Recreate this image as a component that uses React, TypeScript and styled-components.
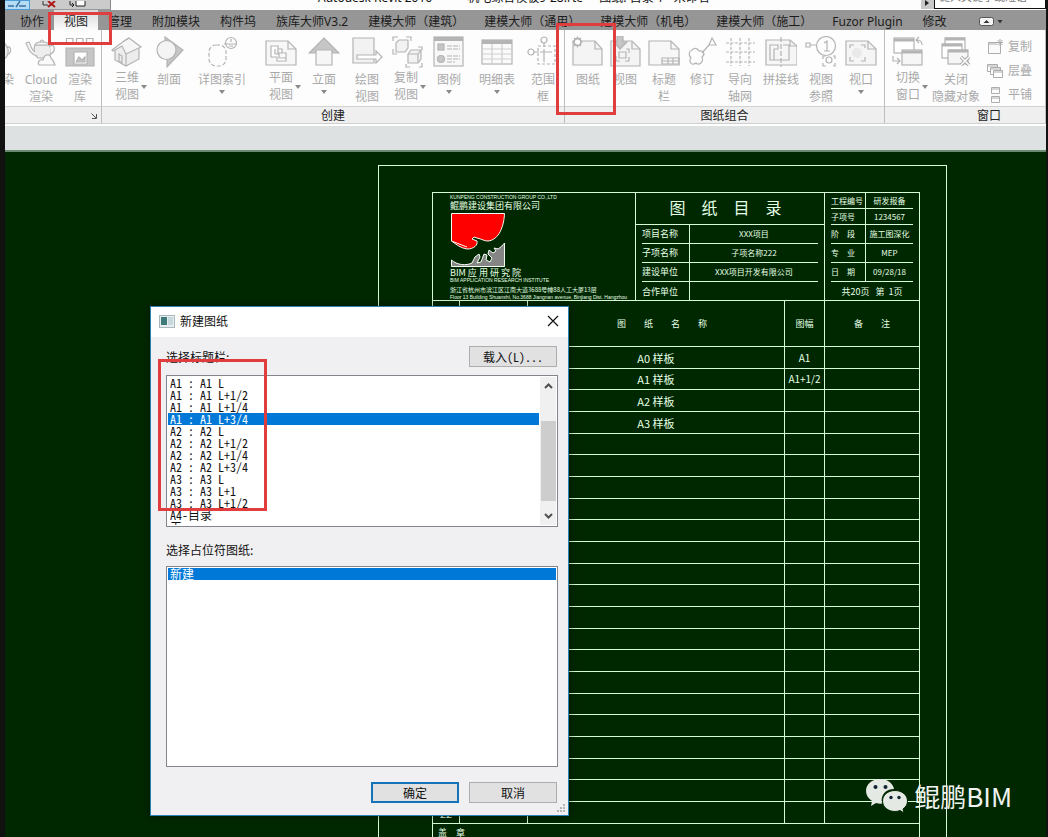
import React from "react";
import styled, { createGlobalStyle, css } from "styled-components";

const GlobalStyle = createGlobalStyle`
  *, *::before, *::after { box-sizing: border-box; }
  body { margin: 0; background: #111; }
  button, input { font: inherit; color: inherit; }
  ul { list-style: none; margin: 0; padding: 0; }
`;

const line = "#d6fbd6";
const paper = "#002800";

/* ---------- Window frame ---------- */

const AppWindow = styled.div`
  position: relative;
  display: flex;
  flex-direction: column;
  height: 100vh;
  overflow: hidden;
  padding: 0 2px 0 5px;
  background: #111;
  color: #222;
  font: 12px/16px "Noto Sans", "Noto Sans CJK SC", sans-serif;
`;

const TitleBar = styled.header`
  display: flex;
  flex: none;
  align-items: flex-end;
  height: 10px;
  overflow: hidden;
  background: #fdfdfd;
`;

const QuickAccess = styled.div`
  display: flex;
  align-items: flex-end;
  gap: 8px;
  width: 106px;
  height: 10px;
  background: #cbcbcb;
  border-right: 1px solid #888;
  border-bottom: 1px solid #999;
`;

const QuickButton = styled.button<{ $active?: boolean }>`
  display: flex;
  padding: 0 2px;
  border: 0;
  background: none;
  ${(p) => p.$active && css`
    background: #b4dcf7;
    outline: 1px solid #4a9bd6;
  `}
`;

const WindowTitle = styled.h1`
  flex: 1;
  margin: 0;
  padding: 0 0 4px 207px;
  font-size: 12px;
  line-height: 16px;
  font-weight: 400;
  color: #111;
  white-space: pre;
`;

const SearchArea = styled.div`
  display: flex;
  align-items: flex-end;
  width: 125px;
  height: 9px;
  align-self: flex-start;
  overflow: hidden;
  background: #c9c9c9;
`;

const SearchToggle = styled.button`
  display: flex;
  width: 13px;
  padding: 0 3px 2px;
  border: 0;
  background: #c9c9c9;
`;

const SearchInput = styled.input`
  flex: 1;
  min-width: 0;
  height: 22px;
  padding: 0 4px 4px;
  border: 1px solid #111;
  background: #fff;
  font-size: 11px;
  &::placeholder { color: #777; opacity: 1; }
`;

/* ---------- Ribbon ---------- */

const TabBar = styled.nav`
  display: flex;
  flex: none;
  height: 20px;
  padding-left: 5px;
  background: #969696;
`;

const Tab = styled.button<{ $active?: boolean }>`
  padding: 4px 10px 0;
  border: 0;
  background: ${(p) => (p.$active ? "linear-gradient(#d9d9d9, #fbfbfb)" : "none")};
  color: #1c1c1c;
  line-height: 16px;
  white-space: nowrap;
`;

const TabToggle = styled.button`
  display: flex;
  align-items: center;
  margin-left: 22px;
  padding: 2px 0 0;
  border: 0;
  background: none;
`;

const Ribbon = styled.div`
  display: flex;
  flex: none;
  height: 94px;
  background: #fdfdfd;
  border-bottom: 1px solid #cfcfcf;
`;

const Panel = styled.section<{ $grow?: boolean }>`
  display: flex;
  flex-direction: column;
  flex: ${(p) => (p.$grow ? "1" : "none")};
  border-right: 1px solid #bdbdbd;
`;

const PanelBody = styled.div<{ $left?: number; $right?: number }>`
  display: flex;
  flex: 1;
  padding: 0 ${(p) => p.$right ?? 0}px 0 ${(p) => p.$left ?? 0}px;
`;

const PanelTitle = styled.h2<{ $inset?: number }>`
  display: flex;
  justify-content: center;
  align-items: center;
  height: 17px;
  margin: 0;
  padding: 1px 0 0 ${(p) => p.$inset ?? 0}px;
  border-top: 1px solid #d2d2d2;
  background: #efeff0;
  font-size: 12px;
  line-height: 16px;
  font-weight: 400;
`;

const Launcher = styled.span`
  display: flex;
  margin-left: auto;
  padding-right: 4px;
`;

const ToolButton = styled.button<{ $w: number; $cut?: boolean }>`
  display: flex;
  flex: none;
  flex-direction: column;
  align-items: ${(p) => (p.$cut ? "flex-end" : "center")};
  width: ${(p) => p.$w}px;
  padding: 6px 0 0;
  border: 0;
  background: none;
  color: #a9a9a9;
  ${(p) => p.$cut && css`
    overflow: hidden;
    padding-right: 5px;
  `}
`;

const ToolIcon = styled.svg`
  flex: none;
  width: 32px;
  height: 32px;
  fill: none;
  stroke: #b4b4b4;
  stroke-width: 1.2;
`;

const ToolLabel = styled.span<{ $side?: boolean }>`
  display: grid;
  grid-template-columns: 1fr auto 1fr;
  align-items: center;
  margin-top: ${(p) => (p.$side ? 1 : 3)}px;
  line-height: 17px;
  text-align: center;
  white-space: pre;
`;

const ToolText = styled.span`
  grid-column: 2;
`;

const DropArrow = styled.span<{ $below?: boolean }>`
  grid-column: 3;
  width: 0;
  margin: ${(p) => (p.$below ? "2px 0 0" : "2px 0 0 2px")};
  border: 3px solid transparent;
  border-top: 4px solid #8a8a8a;
  border-bottom: 0;
`;

const StackedTools = styled.div`
  display: flex;
  flex-direction: column;
  gap: 8px;
  padding: 9px 0 0 6px;
`;

const SmallTool = styled.button`
  display: flex;
  align-items: center;
  gap: 5px;
  padding: 0;
  border: 0;
  background: none;
  color: #a9a9a9;
  line-height: 16px;
`;

const SmallIcon = styled.svg`
  width: 16px;
  height: 16px;
  fill: none;
  stroke: #adadad;
`;

const OptionsBar = styled.div`
  flex: none;
  height: 28px;
  background: #dee1e2;
  border-top: 2px solid #fff;
  border-bottom: 2px solid #6c8a72;
`;

/* ---------- Drawing area ---------- */

const Canvas = styled.main`
  flex: 1;
  min-height: 0;
  padding: 13px 99px 0 373px;
  overflow: hidden;
  background: ${paper};
  color: #e6ffe6;
`;

const Sheet = styled.div`
  padding: 26px 26px 60px 53px;
  border: 1px solid ${line};
`;

const SheetFrame = styled.div`
  border: 1px solid ${line};
  font-family: "Noto Sans CJK SC", sans-serif;
`;

const TitleBlock = styled.div`
  display: grid;
  grid-template-columns: 203px 1fr 94px;
  height: 108px;
  border-bottom: 1px solid ${line};
`;

const Company = styled.div`
  padding: 1px 0 0 17px;
  border-right: 1px solid ${line};
  overflow: hidden;
  white-space: pre;
`;

const TinyLatin = styled.p`
  margin: 0;
  font: 5px/6px "Liberation Sans Narrow", "Liberation Sans", sans-serif;
`;

const CompanyName = styled.p`
  margin: 0;
  font-size: 9px;
  line-height: 12px;
`;

const Institute = styled.p`
  margin: 0;
  font-size: 9px;
  line-height: 9px;
`;

const Address = styled.p`
  margin: 3px 0 0;
  font-size: 6px;
  line-height: 8px;
`;

const Emblem = styled.svg`
  display: block;
  width: 56px;
  height: 56px;
`;

const Middle = styled.div`
  border-right: 1px solid ${line};
`;

const SheetHeading = styled.h3`
  height: 32px;
  margin: 0;
  border-bottom: 1px solid ${line};
  padding-right: 9px;
  font-size: 16px;
  line-height: 28px;
  font-weight: 400;
  text-align: center;
`;

const FieldRow = styled.div<{ $h: number; $label: number }>`
  display: grid;
  grid-template-columns: ${(p) => p.$label}px 1fr;
  height: ${(p) => p.$h}px;
  margin: 0 6px;
  border-bottom: 1px solid ${line};
  &:last-child { border-bottom: 0; }
`;

const FieldLabel = styled.span<{ $size: number }>`
  display: flex;
  align-items: center;
  border-right: 1px solid ${line};
  font-size: ${(p) => p.$size}px;
  line-height: 12px;
  white-space: nowrap;
`;

const FieldValue = styled.span`
  display: flex;
  align-items: center;
  justify-content: center;
  font-size: 8px;
  line-height: 12px;
  white-space: nowrap;
`;

const PageCount = styled.p`
  margin: 0;
  padding-top: 3px;
  font-size: 9px;
  line-height: 14px;
  text-align: center;
  white-space: pre;
`;

const DrawingTable = styled.table`
  width: 100%;
  border-spacing: 0;
  table-layout: fixed;
  font-size: 11px;
  line-height: 14px;
  text-align: center;
  th, td {
    height: 22px;
    padding: 0;
    border-right: 1px solid ${line};
    border-bottom: 1px solid ${line};
    white-space: nowrap;
  }
  th { height: 46px; font-size: 9px; font-weight: 400; }
  th:nth-child(3) { padding-left: 12px; }
  th:last-child, td:last-child { border-right: 0; }
  tbody tr:nth-child(3n + 2) td { height: 21px; }
`;

const Col = styled.col<{ $w?: number }>`
  width: ${(p) => (p.$w ? `${p.$w}px` : "auto")};
`;

const SizeCell = styled.td`
  font-size: 10px;
`;

const StampRow = styled.div`
  height: 40px;
  padding: 3px 5px;
  font-size: 9px;
  line-height: 12px;
`;

/* ---------- Dialog ---------- */

const Dialog = styled.form`
  position: absolute;
  left: 150px;
  top: 306px;
  width: 419px;
  border: 1px solid #2d82b4;
  background: #f0eff1;
  color: #111;
  font-family: "Noto Sans CJK SC", sans-serif;
  box-shadow: 0 0 8px rgba(0, 0, 0, 0.5);
`;

const DialogBar = styled.div`
  display: flex;
  align-items: center;
  gap: 5px;
  height: 30px;
  padding: 0 9px 2px 8px;
  background: #fff;
`;

const DialogTitle = styled.h2`
  flex: 1;
  margin: 0;
  font-size: 12px;
  line-height: 16px;
  font-weight: 400;
`;

const CloseButton = styled.button`
  display: flex;
  padding: 0;
  border: 0;
  background: none;
`;

const DialogBody = styled.div`
  display: flex;
  flex-direction: column;
  padding: 9px 10px 12px 15px;
`;

const DialogRow = styled.div<{ $end?: boolean }>`
  display: flex;
  justify-content: ${(p) => (p.$end ? "flex-end" : "space-between")};
  align-items: center;
  gap: 10px;
  padding-right: 1px;
`;

const Caption = styled.span`
  line-height: 16px;
`;

const PushButton = styled.button<{ $primary?: boolean }>`
  width: 88px;
  height: 21px;
  padding: 0;
  border: ${(p) => (p.$primary ? "2px solid #1473b9" : "1px solid #adadad")};
  background: #e1e1e2;
  line-height: 16px;
  font-family: "Noto Sans Mono CJK SC", "Noto Sans CJK SC", monospace;
`;

const ListBox = styled.div<{ $h: number }>`
  display: flex;
  height: ${(p) => p.$h}px;
  margin: 8px 0 15px;
  padding: 1px;
  border: 1px solid #82868c;
  background: #fff;
  overflow: hidden;
`;

const Options = styled.ul`
  flex: 1;
  height: 100%;
  overflow: hidden;
  font: 12px/12px "Noto Sans Mono CJK SC", "Noto Sans CJK SC", monospace;
`;

const Option = styled.li<{ $selected?: boolean }>`
  padding-left: 2px;
  background: ${(p) => (p.$selected ? "#0078d7" : "none")};
  color: ${(p) => (p.$selected ? "#fff" : "#111")};
  white-space: pre;
`;

const ScrollBar = styled.div`
  display: flex;
  flex-direction: column;
  align-items: center;
  width: 16px;
  margin-left: 1px;
  padding: 6px 0;
  background: #f0f0f0;
`;

const ScrollThumb = styled.div`
  width: 15px;
  height: 80px;
  margin: 32px 0 auto;
  background: #cdcdcd;
`;

const Grip = styled.svg`
  position: absolute;
  right: 2px;
  bottom: 2px;
`;

/* ---------- Overlays ---------- */

const Highlight = styled.div<{ $x: number; $y: number; $w: number; $h: number }>`
  position: absolute;
  left: ${(p) => p.$x}px;
  top: ${(p) => p.$y}px;
  width: ${(p) => p.$w}px;
  height: ${(p) => p.$h}px;
  border: 3px solid #e03e3e;
  pointer-events: none;
`;

const Watermark = styled.div`
  position: absolute;
  right: 36px;
  bottom: 23px;
  display: flex;
  align-items: center;
  gap: 6px;
  color: #f0f3f0;
  font: 26px/36px "Noto Sans CJK SC", sans-serif;
`;

/* ---------- Icons ---------- */

const g = "#c6c6c6";
const lt = "#ededed";
const page = "M1 5H23L31 13V29H1Z";
const fold = "M23 5V13H31";

const icons: Record<string, React.ReactNode> = {
  teapot: (
    <>
      <path d="M8 9C8 6 24 6 24 9C28 14 26 21 22 23H11C7 21 6 17 7 13Z" fill={lt} />
      <path d="M8 14L3 7L1 8C3 11 4 17 8 19M24 11C30 9 30 17 25 19M10 9Q16 12 23 9M14 6Q16 3 18 6" />
    </>
  ),
  cloudpot: (
    <>
      <path d="M10 9C8 13 9 19 13 22H22C27 19 27 13 24 9Z" fill={lt} />
      <path d="M10 9C11 5 23 5 24 9ZM10 16C6 14 6 9 4 6L1 7C3 11 4 18 12 20M25 10C30 7 31 15 26 18" fill="#f6f6f6" />
      <path d="M15 6Q17 2 19 6" />
      <path d="M14 29C12 26 15 23 18 24C19 18 25 17 26 22C28 24 29 26 30 29Z" fill="#fafafa" />
    </>
  ),
  library: (
    <>
      <path d="M2.500 2.500H9V7H2.500ZM12.500 2.500H19V7H12.500ZM22.500 2.500H29V7H22.500Z" />
      <path d="M2 12H30V30H2Z" fill={g} />
      <path d="M10 16H23V28H10Z" fill="#fff" />
      <path d="M12 26L15 21L18 24L21 21V26Z" fill={g} />
    </>
  ),
  house: (
    <>
      <path d="M4 13L4 24L15 30L28 23V11L20 4Z" fill={lt} />
      <path d="M1 14L13 5L18 2L30 11L15 18L11 10L2 15Z" fill="#f6f6f6" />
      <path d="M15 18V30M18 2L13 5M8 18V25L11 27V20Z" />
    </>
  ),
  section: (
    <>
      <path d="M12 1L30 14L14 31V24L12 5Z" fill={g} />
      <circle cx="13.500" cy="14" r="9.500" fill="#f4f4f4" />
    </>
  ),
  callout: (
    <>
      <rect x="3" y="9" width="17" height="21" rx="7" strokeDasharray="4 2" />
      <circle cx="25" cy="7" r="5.500" />
      <path d="M18 8H31M25 3V6M23 10H27" />
    </>
  ),
  plan: (
    <>
      <path d={page} fill="#f7f7f7" />
      <path d={fold} />
      <path d="M6 10H13V13H17V17H21V25H12V21H6ZM10 13V18H14V22H21M13 13V17H17" fill="#fff" />
    </>
  ),
  elevation: (
    <>
      <path d="M16 2L31 17H1Z" fill={g} />
      <path d="M8 14H24V29H8Z" fill="#f6f6f6" />
    </>
  ),
  drafting: (
    <>
      <path d="M2 2H23V27H2Z" fill="#f2f2f2" />
      <path d="M6 19H25V15L31 21L25 27V23H6Z" fill="#fff" />
    </>
  ),
  duplicate: (
    <>
      <path d="M1 5V1H6M14 1H19V5M1 13V18H5M14 28V31H18M27 31H30V27M30 14V11H26" />
      <path d="M4 7L7 4H16V12L13 16H4ZM16 18L19 14H29V23L26 27H16Z" fill="#f2f2f2" />
      <path d="M16 18H26V27M26 18L29 14" />
    </>
  ),
  legend: (
    <>
      <rect x="1" y="1" width="29" height="29" fill="#f8f8f8" />
      <path d="M1 3H30" strokeWidth="4" />
      <rect x="5" y="8" width="6" height="6" fill={g} />
      <circle cx="8" cy="23" r="3.500" fill={g} />
      <path d="M14 10H27M14 13H27M14 20H27M14 23H27M14 26H22" strokeDasharray="5 1" />
    </>
  ),
  schedule: (
    <>
      <rect x="1" y="4" width="30" height="24" fill="#fafafa" />
      <path d="M1 6H31" strokeWidth="4" />
      <path d="M1 13H31M1 18H31M1 23H31M11 8V28M21 8V28" stroke="#d0d0d0" />
    </>
  ),
  scope: (
    <>
      <circle cx="17" cy="4" r="3" />
      <circle cx="4" cy="16" r="3" />
      <path d="M7 16H12M17 7V11M17 13V26M13 16H25" />
      <rect x="11" y="10" width="17" height="18" strokeDasharray="3 2" />
    </>
  ),
  sheet: (
    <>
      <path d="M1 5H23L30 13V29H1Z" fill="#f4f4f4" />
      <path d="M23 5V13H30" />
      <path d="M5.500 0.500V11.500M0.500 6H10.500M2 2L9 10M9 2L2 10" />
      <circle cx="5.500" cy="6" r="3.500" fill="#fff" strokeWidth="1.800" />
    </>
  ),
  view: (
    <>
      <path d="M2 5H23L31 13V30H2Z" fill="#f4f4f4" />
      <path d="M23 5V13H31" />
      <path d="M8 0H14V6H18L11 13L5 6H8Z" fill={g} />
      <path d="M7 20V25H11M16 25H20V21M20 17V13H17M10 16H17V22H10Z" />
    </>
  ),
  titleblock: (
    <>
      <path d={page} fill="#f7f7f7" />
      <path d={fold} />
      <path d="M14 22H31V28H14ZM14 25H31M20 22V28M25 22V28" />
    </>
  ),
  revision: (
    <>
      <path d="M6 14C9 11 12 13 13 15C17 14 20 18 16 21C18 26 13 30 10 27C6 30 2 26 5 22C2 19 3 15 6 14Z" />
      <path d="M16 17L23 9M26 2L30 9H23Z" />
    </>
  ),
  grid: (
    <path d="M2 7H31M2 16H31M2 26H31M7 2V30M16 2V30M25 2V30" strokeDasharray="3 1.500" />
  ),
  matchline: (
    <>
      <path d="M1 4H25L32 10V29H1Z" fill="#f6f6f6" />
      <path d="M25 4V10H32M5 9H13V13H9V24H5ZM18 9H24V24H9" />
      <path d="M16 1V31" strokeDasharray="5 2" />
    </>
  ),
  reference: (
    <>
      <circle cx="21" cy="10" r="9.500" />
      <path d="M1 7H5V11H1ZM5 9H11M19 7L22 5V15M19 15H25" />
      <path d="M18 23V20H21M28 20H30V23M18 27V30H21M28 30H30V27" />
      <circle cx="24" cy="24" r="3" />
    </>
  ),
  viewport: (
    <>
      <path d={page} fill="#f5f5f5" />
      <path d={fold} />
      <path d="M5 12V9H9M16 9H20V12M5 21V25H9M16 25H20V21" />
      <circle cx="12" cy="17" r="5" fill="#e9e9e9" stroke="none" />
    </>
  ),
  switch: (
    <>
      <rect x="2" y="2" width="20" height="15" fill="#fff" />
      <path d="M2 4H22" strokeWidth="3" />
      <rect x="10" y="14" width="20" height="15" fill="#f6f6f6" />
      <path d="M10 16H30" strokeWidth="3" />
      <path d="M30 9C30 5 28 4 25 4M27 1L24 4L27 7M1 20V25H7M5 22L8 25L5 28" />
    </>
  ),
  closeHidden: (
    <>
      <rect x="5" y="2" width="20" height="14" fill="#fff" />
      <path d="M5 3H25" strokeWidth="3" />
      <rect x="2" y="8" width="20" height="14" fill="#fff" />
      <path d="M2 9H22" strokeWidth="3" />
      <rect x="8" y="14" width="20" height="14" fill="#f6f6f6" />
      <path d="M8 15H28" strokeWidth="3" />
      <path d="M21 21L29 29M29 21L21 29" strokeWidth="3.500" stroke="#aaa" />
      <path d="M21 21L29 29M29 21L21 29" strokeWidth="1.500" stroke="#fff" />
    </>
  ),
};

/* ---------- Data ---------- */

type Tool = { icon: string; label: string; w: number; arrow?: "side" | "below"; cut?: boolean };

const renderTools: Tool[] = [
  { icon: "teapot", label: "渲染", w: 14, cut: true },
  { icon: "cloudpot", label: "Cloud\n渲染", w: 44 },
  { icon: "library", label: "渲染\n库", w: 34 },
];

const createTools: Tool[] = [
  { icon: "house", label: "三维\n视图", w: 50, arrow: "side" },
  { icon: "section", label: "剖面", w: 34 },
  { icon: "callout", label: "详图索引", w: 72, arrow: "below" },
  { icon: "plan", label: "平面\n视图", w: 46, arrow: "side" },
  { icon: "elevation", label: "立面", w: 40, arrow: "below" },
  { icon: "drafting", label: "绘图\n视图", w: 46 },
  { icon: "duplicate", label: "复制\n视图", w: 36, arrow: "side" },
  { icon: "legend", label: "图例", w: 46, arrow: "below" },
  { icon: "schedule", label: "明细表", w: 50, arrow: "below" },
  { icon: "scope", label: "范围\n框", w: 42 },
];

const sheetTools: Tool[] = [
  { icon: "sheet", label: "图纸", w: 44 },
  { icon: "view", label: "视图", w: 30 },
  { icon: "titleblock", label: "标题\n栏", w: 48 },
  { icon: "revision", label: "修订", w: 28 },
  { icon: "grid", label: "导向\n轴网", w: 48 },
  { icon: "matchline", label: "拼接线", w: 34 },
  { icon: "reference", label: "视图\n参照", w: 46 },
  { icon: "viewport", label: "视口", w: 34, arrow: "below" },
];

const windowTools: Tool[] = [
  { icon: "switch", label: "切换\n窗口", w: 46, arrow: "side" },
  { icon: "closeHidden", label: "关闭\n隐藏对象", w: 50 },
];

const tabs = [
  "协作", "视图", "管理", "附加模块", "构件坞", "族库大师V3.2", "建模大师（建筑）",
  "建模大师（通用）", "建模大师（机电）", "建模大师（施工）", "Fuzor Plugin", "修改",
];

const projectFields = [
  ["项目名称", "XXX项目"],
  ["子项名称", "子项名称222"],
  ["建设单位", "XXX项目开发有限公司"],
  ["合作单位", ""],
];

const sheetFields: [string, string, number][] = [
  ["工程编号", "研发报备", 16],
  ["子项号", "1234567", 16],
  ["阶　段", "施工图深化", 19],
  ["专　业", "MEP", 19],
  ["日　期", "09/28/18", 19],
];

const drawings = Array.from({ length: 22 }, (_, i) => ({
  no: i === 21 ? "22" : "",
  name: ["A0 样板", "A1 样板", "A2 样板", "A3 样板"][i] ?? "",
  size: ["A1", "A1+1/2"][i] ?? "",
}));

const titleBlocks = [
  "A1 : A1 L", "A1 : A1 L+1/2", "A1 : A1 L+1/4", "A1 : A1 L+3/4",
  "A2 : A2 L", "A2 : A2 L+1/2", "A2 : A2 L+1/4", "A2 : A2 L+3/4",
  "A3 : A3 L", "A3 : A3 L+1", "A3 : A3 L+1/2", "A4-目录", "无",
];

function Tools({ items }: { items: Tool[] }) {
  return (
    <>
      {items.map((t) => (
        <ToolButton key={t.icon} $w={t.w} $cut={t.cut}>
          <ToolIcon viewBox="0 0 32 32">{icons[t.icon]}</ToolIcon>
          <ToolLabel $side={t.arrow === "side"}>
            <ToolText>{t.label}</ToolText>
            {t.arrow === "side" && <DropArrow />}
          </ToolLabel>
          {t.arrow === "below" && <DropArrow $below />}
        </ToolButton>
      ))}
    </>
  );
}

const Chevron = ({ up }: { up?: boolean }) => (
  <svg width="9" height="6" viewBox="0 0 9 6" fill="none" stroke="#505050" strokeWidth="2">
    <path d={up ? "M1 5L4.500 1.500L8 5" : "M1 1L4.500 4.500L8 1"} />
  </svg>
);

export default function App() {
  return (
    <AppWindow>
      <GlobalStyle />
      <TitleBar>
        <QuickAccess>
          <QuickButton $active aria-label="细线">
            <svg width="20" height="8" viewBox="0 0 20 8" fill="none" stroke="#3a6f9c" strokeWidth="1.500">
              <path d="M1 5H7M9 6L13 0M12 5H19" />
            </svg>
          </QuickButton>
          <QuickButton aria-label="关闭隐藏窗口">
            <svg width="18" height="8" viewBox="0 0 18 8" fill="none" stroke="#333">
              <path d="M4 0V4H9" />
              <path d="M9 0L16 6M16 0L9 6" stroke="#b01818" strokeWidth="2" />
            </svg>
          </QuickButton>
          <QuickButton aria-label="切换窗口">
            <svg width="18" height="8" viewBox="0 0 18 8" fill="#fff" stroke="#222">
              <path d="M1 0V4H5M3 2L5 4L3 6" fill="none" />
              <path d="M7 -2H16V5H7Z" />
            </svg>
          </QuickButton>
        </QuickAccess>
        <WindowTitle>{"Autodesk Revit 2016 -         机电综合模板9-28.rte  -  图纸: 目录 1 - 未命名"}</WindowTitle>
        <SearchArea>
          <SearchToggle aria-label="展开">
            <svg width="6" height="7" viewBox="0 0 6 7"><path d="M1 0L5 3L1 6Z" fill="#222" /></svg>
          </SearchToggle>
          <SearchInput aria-label="搜索" placeholder="键入关键字或短语" />
        </SearchArea>
      </TitleBar>

      <TabBar>
        {tabs.map((t) => (
          <Tab key={t} $active={t === "视图"}>{t}</Tab>
        ))}
        <TabToggle aria-label="最小化功能区">
          <svg width="24" height="9" viewBox="0 0 24 9">
            <rect x="0.500" y="0.500" width="14" height="8" rx="2" fill="#f4f4f4" stroke="#555" />
            <path d="M4.500 6L7.500 3L10.500 6ZM18.500 3H23.500L21 6.500Z" fill="#333" />
          </svg>
        </TabToggle>
      </TabBar>

      <Ribbon>
        <Panel>
          <PanelBody $right={4}>
            <Tools items={renderTools} />
          </PanelBody>
          <PanelTitle>
            <Launcher>
              <svg width="6" height="6" viewBox="0 0 6 6" fill="none" stroke="#555">
                <path d="M0.500 0.500L5 5M5.500 1V5.500H1" />
              </svg>
            </Launcher>
          </PanelTitle>
        </Panel>
        <Panel>
          <PanelBody>
            <Tools items={createTools} />
          </PanelBody>
          <PanelTitle>创建</PanelTitle>
        </Panel>
        <Panel>
          <PanelBody $left={1} $right={6}>
            <Tools items={sheetTools} />
          </PanelBody>
          <PanelTitle>图纸组合</PanelTitle>
        </Panel>
        <Panel $grow>
          <PanelBody>
            <Tools items={windowTools} />
            <StackedTools>
              <SmallTool>
                <SmallIcon viewBox="0 0 16 16">
                  <path d="M1.500 3.500H13.500V14.500H1.500ZM1.500 5H10" fill="#fafafa" />
                  <path d="M13 0V7M9.500 3.500H16M10.500 1L15.500 6M15.500 1L10.500 6" />
                </SmallIcon>
                复制
              </SmallTool>
              <SmallTool>
                <SmallIcon viewBox="0 0 16 16">
                  <path d="M0.500 1.500H10.500V8.500H0.500ZM0.500 3H10.500" fill="#fff" />
                  <path d="M3.500 4.500H13.500V11.500H3.500ZM3.500 6H13.500" fill="#fff" />
                  <path d="M6.500 7.500H15.500V14.500H6.500ZM6.500 9H15.500" fill="#fff" />
                </SmallIcon>
                层叠
              </SmallTool>
              <SmallTool>
                <SmallIcon viewBox="0 0 16 16">
                  <path d="M4.500 0.500H12.500V6.500H4.500ZM4.500 2H12.500M4.500 9.500H12.500V15.500H4.500ZM4.500 11H12.500" />
                </SmallIcon>
                平铺
              </SmallTool>
            </StackedTools>
          </PanelBody>
          <PanelTitle $inset={48}>窗口</PanelTitle>
        </Panel>
      </Ribbon>
      <OptionsBar />

      <Canvas>
        <Sheet>
          <SheetFrame>
            <TitleBlock>
              <Company>
                <TinyLatin>KUNPENG CONSTRUCTION GROUP CO.,LTD</TinyLatin>
                <CompanyName>鲲鹏建设集团有限公司</CompanyName>
                <Emblem viewBox="0 0 56 56" stroke="#f4fff4">
                  <path
                    d="M1.500 1.500H54.500C54 14 49 28 38 29C34 29 32 27 27 26L24 25L22 27L27 29C28 33 24 37 17 37C10 36 6 32 1.500 29Z"
                    fill="#f00"
                  />
                  <path d="M1.500 29L17 35" fill="none" />
                  <path
                    d="M1.500 48C7 53 16 54 22 51L25 45L29 42L30 45L27 51L31 50L34 42L37 43L36 48L40 50L42 46L38 42L39 38L43 41L46 39L44 36L48 37C51 35 53 33 54.500 31V54.500H1.500Z"
                    fill="#858585"
                  />
                </Emblem>
                <Institute>BIM 应 用 研 究 院</Institute>
                <TinyLatin>BIM APPLICATION RESEARCH INSTITUTE</TinyLatin>
                <Address>浙江省杭州市滨江区江南大道3688号幢88人工大厦13层</Address>
                <TinyLatin>Floor 13 Building Shuanshi, No.3688 Jiangnan avenue, Binjiang Dist. Hangzhou</TinyLatin>
              </Company>
              <Middle>
                <SheetHeading>图　纸　目　录</SheetHeading>
                {projectFields.map(([label, value]) => (
                  <FieldRow key={label} $h={19} $label={48}>
                    <FieldLabel $size={9}>{label}</FieldLabel>
                    <FieldValue>{value}</FieldValue>
                  </FieldRow>
                ))}
              </Middle>
              <div>
                {sheetFields.map(([label, value, h]) => (
                  <FieldRow key={label} $h={h} $label={35}>
                    <FieldLabel $size={8}>{label}</FieldLabel>
                    <FieldValue>{value}</FieldValue>
                  </FieldRow>
                ))}
                <PageCount>{"共20页   第  1页"}</PageCount>
              </div>
            </TitleBlock>
            <DrawingTable>
              <colgroup>
                <Col $w={27} />
                <Col $w={68} />
                <Col />
                <Col $w={40} />
                <Col $w={94} />
              </colgroup>
              <thead>
                <tr>
                  <th />
                  <th />
                  <th>图　　纸　　名　　称</th>
                  <th>图幅</th>
                  <th>备　　注</th>
                </tr>
              </thead>
              <tbody>
                {drawings.map((d, i) => (
                  <tr key={i}>
                    <td>{d.no}</td>
                    <td />
                    <td>{d.name}</td>
                    <SizeCell>{d.size}</SizeCell>
                    <td />
                  </tr>
                ))}
              </tbody>
            </DrawingTable>
            <StampRow>盖　章</StampRow>
          </SheetFrame>
        </Sheet>
      </Canvas>

      <Watermark>
        <svg width="42" height="36" viewBox="0 0 42 36" fill="#e4e9e4">
          <path d="M14 1C6 1 0 6 0 13C0 17 2 20 6 23L5 28L10 25C12 25.500 14 26 16 25.500C14 17 20 11 28 11C27 5 21 1 14 1Z" />
          <path d="M29 12.500C22 12.500 16.500 17 16.500 23C16.500 29 22 33.500 29 33.500C31 33.500 32 33.200 34 32.500L38 35L37 31C40 29 41.500 26 41.500 23C41.500 17 36 12.500 29 12.500Z" stroke={paper} />
          <g fill="#123">
            <circle cx="9.500" cy="9" r="2" />
            <circle cx="19.500" cy="9" r="2" />
            <circle cx="25" cy="19.500" r="1.700" />
            <circle cx="33" cy="19.500" r="1.700" />
          </g>
        </svg>
        鲲鹏BIM
      </Watermark>

      <Dialog onSubmit={(e) => e.preventDefault()} aria-label="新建图纸">
        <DialogBar>
          <svg width="16" height="13" viewBox="0 0 16 13">
            <rect x="0.500" y="0.500" width="15" height="12" fill="#e8eef0" stroke="#a9b8bd" />
            <path d="M2 2H8V10H2Z" fill="#3e7a78" />
            <path d="M9 2H14V10H9Z" fill="#c9d8dc" />
          </svg>
          <DialogTitle>新建图纸</DialogTitle>
          <CloseButton type="button" aria-label="关闭">
            <svg width="12" height="12" viewBox="0 0 12 12" stroke="#111" strokeWidth="1.200">
              <path d="M1 1L11 11M11 1L1 11" />
            </svg>
          </CloseButton>
        </DialogBar>
        <DialogBody>
          <DialogRow>
            <Caption id="title-blocks">选择标题栏:</Caption>
            <PushButton type="button">载入(L)...</PushButton>
          </DialogRow>
          <ListBox $h={152}>
            <Options role="listbox" aria-labelledby="title-blocks">
              {titleBlocks.map((t, i) => (
                <Option key={t} role="option" aria-selected={i === 3} $selected={i === 3}>{t}</Option>
              ))}
            </Options>
            <ScrollBar>
              <Chevron up />
              <ScrollThumb />
              <Chevron />
            </ScrollBar>
          </ListBox>
          <Caption id="placeholders">选择占位符图纸:</Caption>
          <ListBox $h={201}>
            <Options role="listbox" aria-labelledby="placeholders">
              <Option role="option" aria-selected $selected>新建</Option>
            </Options>
          </ListBox>
          <DialogRow $end>
            <PushButton $primary>确定</PushButton>
            <PushButton type="button">取消</PushButton>
          </DialogRow>
        </DialogBody>
        <Grip width="9" height="9" viewBox="0 0 9 9" fill="#b5b5b5">
          <path d="M6 0H8V2H6ZM3 3H5V5H3ZM6 3H8V5H6ZM0 6H2V8H0ZM3 6H5V8H3ZM6 6H8V8H6Z" />
        </Grip>
      </Dialog>

      <Highlight $x={48} $y={12} $w={64} $h={33} />
      <Highlight $x={556} $y={23} $w={60} $h={92} />
      <Highlight $x={158} $y={359} $w={109} $h={152} />
    </AppWindow>
  );
}
